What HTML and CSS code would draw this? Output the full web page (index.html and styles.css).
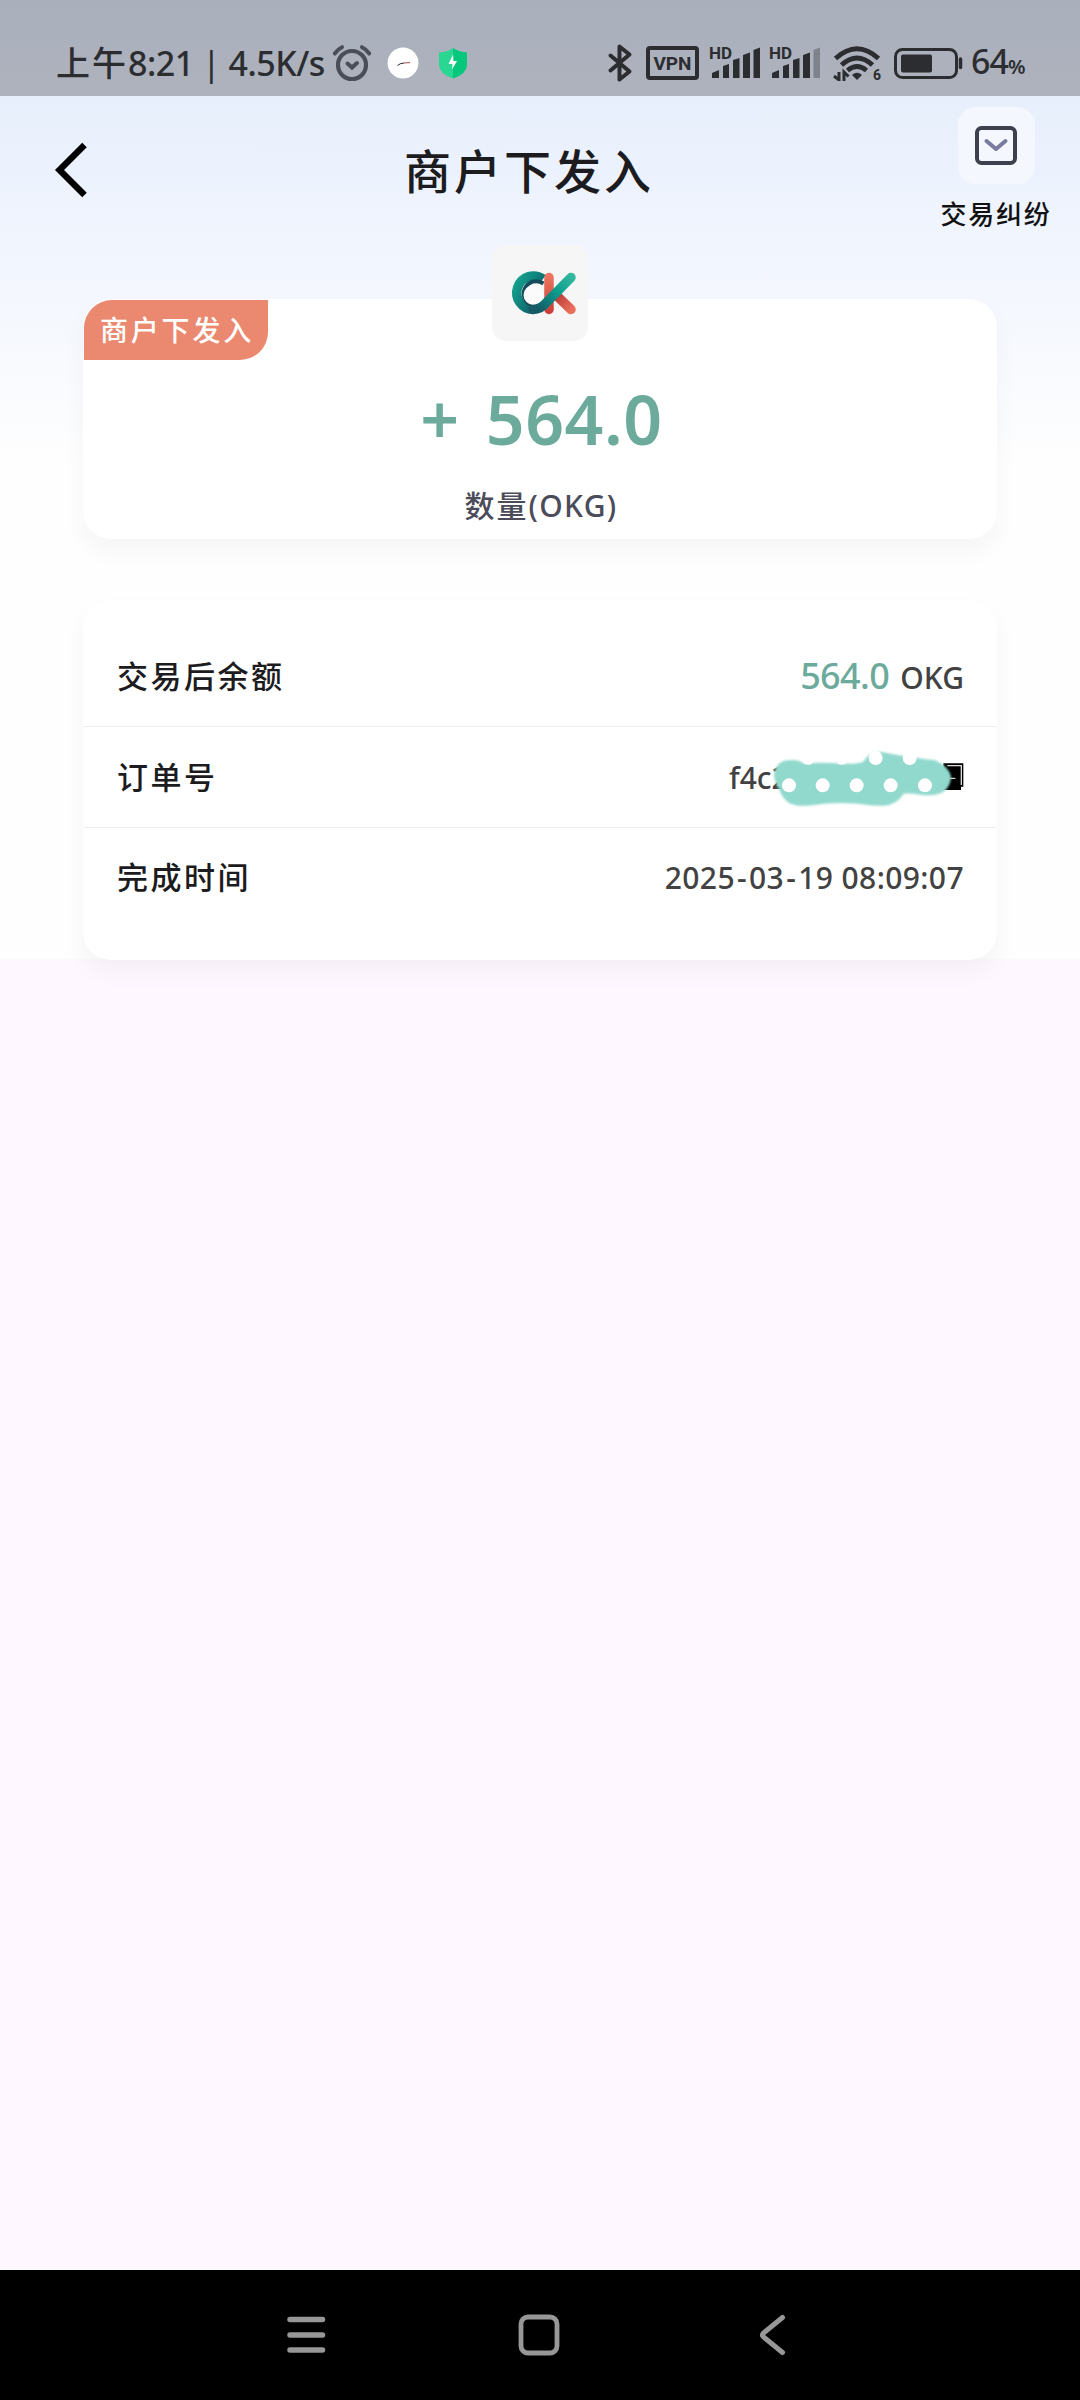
FILE: index.html
```html
<!DOCTYPE html>
<html lang="zh-CN">
<head>
<meta charset="utf-8">
<title>商户下发入</title>
<link rel="stylesheet" href="styles.css">
</head>
<body>
<header class="status">
  <div class="status-left">
    <span class="clock"><span class="period">上午</span>8:21 <span class="bar">|</span> 4.5K/s</span>
    <svg class="alarm" width="40" height="38" viewBox="0 0 40 38" fill="none" stroke="#4b4e56" stroke-linecap="round">
      <circle cx="20" cy="21" r="14" stroke-width="4.2"/>
      <path d="M2.8 9.5Q6 5 10 3.2M37.2 9.5Q34 5 30 3.2" stroke-width="4"/>
      <path d="M15.5 19.5l4.5 4 5-4.5" stroke-width="4"/>
    </svg>
    <svg class="bird" width="32" height="32" viewBox="0 0 32 32"><circle cx="16" cy="16" r="15.4" fill="#fff"/><path d="M10.500 18.500Q13 16.200 17 16" fill="none" stroke="#252525"/><path d="M17 16l6-.4" stroke="#ae4a4a"/></svg>
    <svg class="shield" width="30" height="32" viewBox="0 0 30 32"><path d="M15 1Q20 4.800 29 5.500V18Q28.500 27 15 31.500Q1.500 27 1 18V5.500Q10 4.800 15 1Z" fill="#29d793"/><path d="M15 1Q20 4.800 29 5.500V18Q28.500 27 15 31.500Z" fill="#06c77c"/><path d="M15 7.500L10.500 17H14.500L14 22.500L19 14H15.500Z" fill="#fff"/></svg>
  </div>
  <div class="status-right">
    <svg class="bt" width="26" height="40" viewBox="0 0 26 40" fill="none" stroke="#2b2d31" stroke-width="4" stroke-linecap="round" stroke-linejoin="round"><path d="M3.500 12.500L22.500 28.500L12.500 36.500V3.500L22.500 11.500L3.500 27.500"/></svg>
    <span class="vpn">VPN</span>
    <span class="signal"><b>HD</b><svg width="50" height="32" viewBox="0 0 50 32" fill="#2b2d31"><path d="M1 31V26L8 23V31ZM12 31V19L18 17V31ZM22 31V13L28.500 11V31ZM32 31V8L39 5.500V31ZM42.500 31V3L49 .5V31Z"/></svg></span>
    <span class="signal"><b>HD</b><svg width="50" height="32" viewBox="0 0 50 32" fill="#2b2d31"><path d="M1 31V26L8 23V31ZM12 31V19L18 17V31ZM22 31V13L28.500 11V31ZM32 31V8L39 5.500V31Z"/><path d="M42.500 31V3L49 .5V31Z" fill="#7d828b"/></svg></span>
    <span class="wifi"><svg width="48" height="36" viewBox="0 0 48 36" fill="none" stroke="#2b2d31"><path d="M2.500 13.500Q24-6 45.500 13.500" stroke-width="5"/><path d="M8.500 20Q24 6 39.500 20" stroke-width="5"/><path d="M14.500 25.500Q24 17.500 33.500 25.500" stroke-width="4.800"/><path d="M19 30Q24 25.500 29 30L24 35Z" fill="#2b2d31" stroke="none"/><path d="M6 27V35L1 31M11 36V27L15.500 31.500" stroke-width="3"/></svg><i>6</i></span>
    <svg class="battery" width="70" height="32" viewBox="0 0 70 32"><rect x="1.500" y="2.500" width="61" height="28" rx="7" fill="none" stroke="#2b2d31" stroke-width="3"/><rect x="7" y="7.500" width="31" height="18" rx="2" fill="#2b2d31"/><path d="M66.500 12V20.500" stroke="#2b2d31" stroke-width="3.500" stroke-linecap="round"/></svg>
    <span class="percent">64<small>%</small></span>
  </div>
</header>

<main class="page">
  <div class="top">
    <svg class="back" width="40" height="60" viewBox="0 0 40 60" fill="none" stroke="#000" stroke-width="6.400"><path d="M35.500 5L10.500 30L35.500 55"/></svg>
    <h1>商户下发入</h1>
    <div class="dispute">
      <span class="dispute-icon"><svg width="42" height="40" viewBox="0 0 42 40" fill="none"><rect x="2" y="2" width="38" height="35" rx="4.500" stroke="#3d414e" stroke-width="4"/><path d="M11.500 15L21 23L30.500 15" stroke="#797ba0" stroke-width="4" stroke-linecap="round" stroke-linejoin="round"/></svg></span>
      <span class="dispute-text">交易纠纷</span>
    </div>
  </div>

  <section class="card summary">
    <span class="tag">商户下发入</span>
    <span class="logo">
      <svg width="96" height="96" viewBox="0 0 96 96" fill="none" stroke-linecap="round">
        <defs>
          <linearGradient id="ring" x1="22" y1="40" x2="50" y2="56" gradientUnits="userSpaceOnUse"><stop offset="0" stop-color="#15a08e"/><stop offset=".5" stop-color="#0f7f7a"/><stop offset="1" stop-color="#175765"/></linearGradient>
          <linearGradient id="arm" x1="45" y1="63" x2="80" y2="30" gradientUnits="userSpaceOnUse"><stop offset="0" stop-color="#145b66"/><stop offset=".55" stop-color="#0c9e8e"/><stop offset="1" stop-color="#35b99f"/></linearGradient>
          <linearGradient id="stem" x1="0" y1="28" x2="0" y2="70" gradientUnits="userSpaceOnUse"><stop offset="0" stop-color="#ee7862"/><stop offset="1" stop-color="#ca3b35"/></linearGradient>
          <linearGradient id="leg" x1="64" y1="50" x2="80" y2="65" gradientUnits="userSpaceOnUse"><stop offset="0" stop-color="#b93936"/><stop offset="1" stop-color="#eb705c"/></linearGradient>
        </defs>
        <path d="M51 34A16.700 16.700 0 1 0 41 64.400" stroke="url(#ring)" stroke-width="9.500" stroke-linecap="butt"/>
        <path d="M51.500 38.500A12.500 12.500 0 1 0 42 61" stroke="#164b5a" stroke-width="4" stroke-linecap="butt"/>
        <circle cx="41.500" cy="50" r="10" fill="#fbfbfb"/>
        <path d="M57 32.500V64.500" stroke="url(#stem)" stroke-width="9.500"/>
        <path d="M64 50L79 64.500" stroke="url(#leg)" stroke-width="9.500"/>
        <path d="M41 64.400Q49 64.400 55 57L79 32.500" stroke="url(#arm)" stroke-width="9.500"/>
      </svg>
    </span>
    <strong class="amount"><span>+</span><span>564.0</span></strong>
    <span class="unit">数量<span>(OKG)</span></span>
  </section>

  <section class="card details">
    <div class="row"><span class="label">交易后余额</span><span class="value"><em>564.0</em><span class="okg">OKG</span></span></div>
    <div class="row">
      <span class="label">订单号</span>
      <span class="value order">f4c2
        <svg class="smudge" viewBox="0 0 900 270" width="300" height="90">
          <defs><filter id="soft" x="-10%" y="-10%" width="120%" height="120%"><feGaussianBlur stdDeviation="3"/></filter></defs>
          <path d="M730 100H790V170H783V180H730Z" fill="#000"/>
          <path d="M742 107H784V165" fill="none" stroke="#ddd" stroke-width="4"/><path d="M748 145H766" stroke="#fff" stroke-width="3"/>
          <path d="M222 135Q225 103 250 93Q285 84 313 100Q360 96 420 100Q470 104 490 95Q505 65 545 66Q590 76 645 82Q680 90 704 90Q748 110 753 140Q751 180 715 192Q690 199 660 194Q632 189 611 191Q590 225 550 227Q515 228 475 221Q400 216 350 224Q290 233 266 218Q248 207 237 177Q224 158 222 135Z" fill="#91d9cd" filter="url(#soft)"/>
          <g fill="#fff"><circle cx="267" cy="166" r="21"/><circle cx="368" cy="166" r="21"/><circle cx="470" cy="166" r="21"/><circle cx="572" cy="166" r="21"/><circle cx="675" cy="166" r="21"/><circle cx="527" cy="84" r="21"/><circle cx="629" cy="84" r="21"/><ellipse cx="324" cy="96" rx="14" ry="8"/><ellipse cx="425" cy="96" rx="14" ry="8"/></g>
        </svg>
      </span>
    </div>
    <div class="row"><span class="label">完成时间</span><span class="value date">2025<i>-</i>03<i>-</i>19 08:09:07</span></div>
  </section>
</main>

<footer class="nav">
  <svg width="40" height="42" viewBox="0 0 40 42" stroke="#979797" stroke-width="5.500" stroke-linecap="round"><path d="M4 5.500H36.500M4 21H36.500M4 36H36.500"/></svg>
  <svg width="42" height="42" viewBox="0 0 42 42" fill="none" stroke="#979797" stroke-width="4.800"><rect x="3" y="3" width="36" height="36" rx="7"/></svg>
  <svg width="28" height="42" viewBox="0 0 28 42" fill="none" stroke="#979797" stroke-width="5" stroke-linecap="round"><path d="M24.500 3.500L5.500 19Q3.500 21 5.500 23L24.500 38.500"/></svg>
</footer>
</body>
</html>
```
FILE: styles.css
```css
* { box-sizing: border-box; }
body {
  margin: 0;
  height: 2400px;
  display: flex;
  flex-direction: column;
  background: #fef7ff;
  color: #1c1b20;
  font-family: "Noto Sans", "Noto Sans CJK SC", sans-serif;
  font-weight: 500;
}
svg { display: block; flex: none; }
.status {
  height: 96px;
  display: flex;
  justify-content: space-between;
  padding: 43px 54px 0 56px;
  background: linear-gradient(#a9b0bc, #aeb2bd);
  color: #2b2d31;
}
.status-left, .status-right { display: flex; height: 40px; align-items: center; }
.clock { font-size: 34px; line-height: 40px; white-space: pre; width: 276px; letter-spacing: -.5px; }
.period { letter-spacing: 2px; }
.bar { font-weight: 400; }
.bird { margin-left: 15px; }
.shield { margin-left: 19px; }
.bt { margin-right: -1px; }
.vpn {
  width: 53px;
  height: 34px;
  margin-left: 14px;
  border: 4px solid #2b2d31;
  border-radius: 4px;
  font: 700 19px/27px Roboto, sans-serif;
  text-align: center;
}
.signal { position: relative; width: 50px; height: 32px; margin-left: 12px; }
.signal + .signal { margin-left: 10px; }
.signal b { position: absolute; left: -2px; top: -2px; font: 700 17px/17px Roboto, sans-serif; }
.wifi { position: relative; margin-left: 12px; }
.wifi i { position: absolute; right: 0; bottom: -1px; font: 700 14px/14px Roboto, sans-serif; }
.battery { margin-left: 13px; }
.percent { margin: 2px 0 0 7px; width: 55px; font-size: 34px; line-height: 40px; white-space: nowrap; letter-spacing: -1px; }
.percent small { font-size: 20px; font-weight: 600; }

.page { height: 863px; background: linear-gradient(#e7effc 0, #f1f5fe 150px, #f5f8fe 220px, #fefefe 365px, #fefefe); }
.top { height: 203px; display: flex; padding-right: 26px; }
.back { margin: 44px 0 0 49px; }
h1 { margin: 47px 0 0 315px; font-size: 47px; line-height: 56px; font-weight: 500; letter-spacing: 3px; white-space: nowrap; }
.dispute { width: 116px; margin-left: auto; display: flex; flex-direction: column; align-items: center; padding-top: 11px; }
.dispute-icon { width: 77px; height: 77px; border-radius: 18px; background: #f4f8fe; display: grid; place-items: center; }
.dispute-text { margin-top: 14px; font-size: 26px; line-height: 32px; letter-spacing: 1.700px; white-space: nowrap; color: #111; }

.card { margin: 0 83px; background: #fff; border-radius: 28px; box-shadow: 0 12px 24px rgba(0, 0, 0, .04); }
.summary { position: relative; height: 240px; display: flex; flex-direction: column; align-items: center; padding-top: 78px; }
.tag {
  position: absolute;
  left: 1px;
  top: 1px;
  width: 184px;
  height: 60px;
  padding-left: 16px;
  border-radius: 28px 0;
  background: #ea896f;
  color: #fff;
  font-size: 28px;
  line-height: 60px;
  letter-spacing: 2.800px;
  white-space: nowrap;
}
.logo { position: absolute; left: 409px; top: -54px; width: 96px; height: 96px; border-radius: 14px; background: #f6f6f6; }
.amount { display: flex; gap: 26px; margin-left: 3px; color: #6caa9c; font-size: 68px; line-height: 84px; font-weight: 600; letter-spacing: .5px; }
.unit { margin-top: 25px; margin-left: 2px; color: #4b4b5a; font-size: 30px; line-height: 40px; letter-spacing: 2px; }
.unit span { letter-spacing: 1.300px; }
.details { height: 360px; margin-top: 61px; padding-top: 26px; }
.row { height: 101px; display: flex; align-items: center; justify-content: space-between; padding: 0 33px 2px 34px; border-bottom: 1px solid #ededed; }
.row:last-child { border: 0; height: 98px; }
.label { font-size: 31px; letter-spacing: 2.500px; margin-top: -2px; }
.value { font-size: 30px; color: #424242; display: flex; align-items: baseline; }
.value em { font-style: normal; font-size: 36px; letter-spacing: -.6px; color: #6caa9c; margin-right: 11px; }
.order { position: relative; width: 235px; padding-top: 2px; }
.smudge { position: absolute; left: -29px; top: -25px; }
.date { display: block; letter-spacing: .4px; padding-top: 2px; }
.date i { font-style: normal; padding: 0 2px; }

.nav { height: 130px; margin-top: auto; padding: 44px 0 0 286px; display: flex; background: #000; }
.nav svg:nth-child(2) { margin-left: 192px; }
.nav svg:nth-child(3) { margin-left: 198px; }
```
